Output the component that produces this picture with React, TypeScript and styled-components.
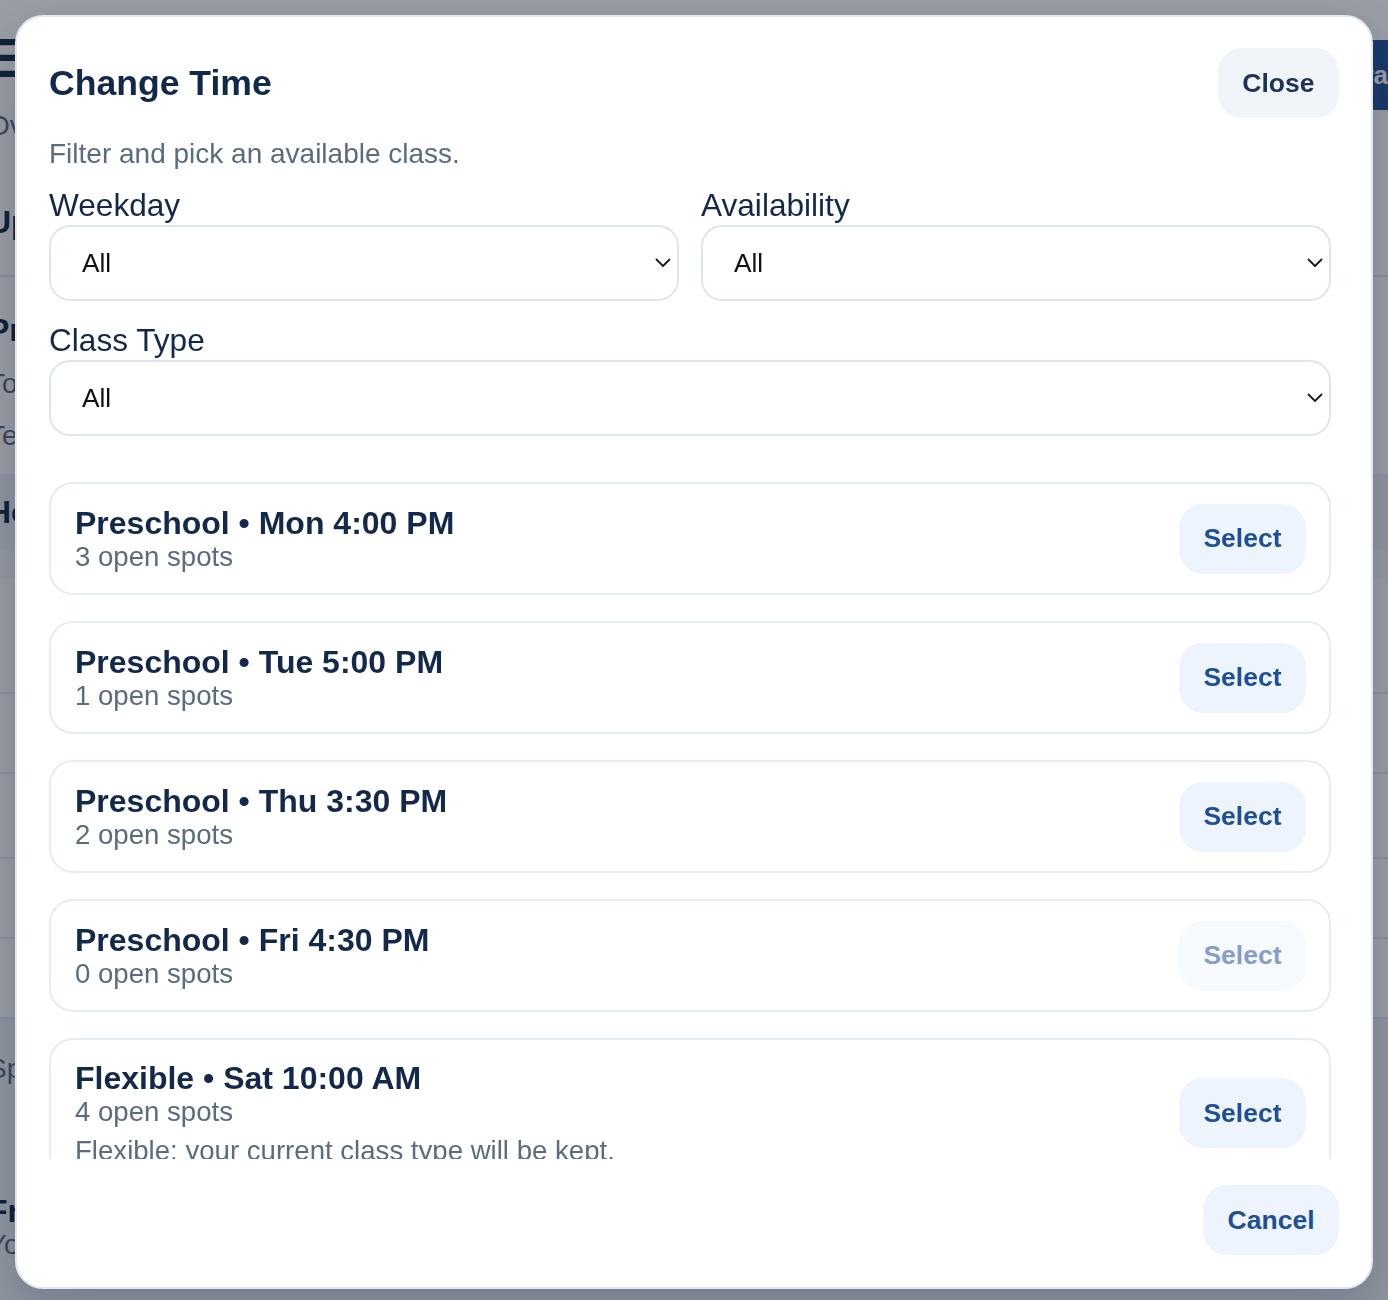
import React, { useState } from 'react';
import styled, { createGlobalStyle } from 'styled-components';

const COLORS = {
  Navy: '#13294b',
  Slate: '#5b6b80',
  Line: '#e2e8f0',
  CardLine: '#e6ecf5',
  Blue: '#1f4f95',
  BlueBg: '#eef4fd',
  GrayBg: '#f1f4f9',
  GrayText: '#1e3358',
};

const GlobalStyle = createGlobalStyle`
  * { box-sizing: border-box; }
  html, body { margin: 0; height: 100%; overflow: hidden; }
  body {
    font-family: "Liberation Sans", Arial, Helvetica, sans-serif;
    background: #ffffff;
    color: ${COLORS.Navy};
  }
`;

type Slot = {
  id: number;
  type: string;
  day: string;
  time: string;
  spots: number;
  note?: string;
};

const SLOTS: Slot[] = [
  { id: 1, type: 'Preschool', day: 'Mon', time: '4:00 PM', spots: 3 },
  { id: 2, type: 'Preschool', day: 'Tue', time: '5:00 PM', spots: 1 },
  { id: 3, type: 'Preschool', day: 'Thu', time: '3:30 PM', spots: 2 },
  { id: 4, type: 'Preschool', day: 'Fri', time: '4:30 PM', spots: 0 },
  {
    id: 5,
    type: 'Flexible',
    day: 'Sat',
    time: '10:00 AM',
    spots: 4,
    note: 'Flexible: your current class type will be kept.',
  },
];

const Chevron = () => (
  <S.Chevron width="16" height="10" viewBox="0 0 16 10" fill="none">
    <path d="M1.5 1.5 8 8l6.5-6.5" stroke="#1b1b1b" strokeWidth="1.8" strokeLinecap="round" strokeLinejoin="round" />
  </S.Chevron>
);

type FilterProps = {
  id: string;
  label: string;
  options: string[];
  wide?: boolean;
};

const Filter = ({ id, label, options, wide }: FilterProps) => (
  <S.Field $wide={wide}>
    <S.Label htmlFor={id}>{label}</S.Label>
    <S.SelectWrap>
      <S.Select id={id} defaultValue="All">
        {options.map((o) => (
          <option key={o} value={o}>
            {o}
          </option>
        ))}
      </S.Select>
      <Chevron />
    </S.SelectWrap>
  </S.Field>
);

const BackgroundPage = () => (
  <B.Page aria-hidden="true">
    <B.Top>
      <B.Heading>Enrollment</B.Heading>
      <B.Button>Book extra</B.Button>
    </B.Top>
    <B.Sub>Overview of your bookings</B.Sub>
    <B.Section>Upcoming bookings</B.Section>
    <B.Rule />
    <B.Block>
      <B.Strong>Preschool level</B.Strong>
      <B.Muted>Tool kit included</B.Muted>
      <B.Muted>Teacher: Hannah</B.Muted>
    </B.Block>
    <B.Band $tone="dark">
      <B.Strong>Houses</B.Strong>
    </B.Band>
    <B.Band $tone="light" />
    <B.Row $h={115} />
    <B.Row $h={80} />
    <B.Row $h={85} />
    <B.Row $h={80} />
    <B.Row $h={80} />
    <B.Band $tone="dark" $h={290}>
      <B.Muted>Space left</B.Muted>
      <B.Gap />
      <B.Strong>Free time</B.Strong>
      <B.Muted>Your notes</B.Muted>
    </B.Band>
  </B.Page>
);

const App = () => {
  const [picked, setPicked] = useState<number | null>(null);

  return (
    <>
      <GlobalStyle />
      <BackgroundPage />
      <S.Overlay>
        <S.Modal role="dialog" aria-modal="true" aria-labelledby="change-time-title">
          <S.Header>
            <S.Title id="change-time-title">Change Time</S.Title>
            <S.Button $tone="neutral">Close</S.Button>
          </S.Header>
          <S.Subtitle>Filter and pick an available class.</S.Subtitle>
          <S.Body>
            <S.Filters>
              <Filter id="weekday" label="Weekday" options={['All', 'Mon', 'Tue', 'Thu', 'Fri', 'Sat']} />
              <Filter id="availability" label="Availability" options={['All', 'Open spots', 'Full']} />
              <Filter id="class-type" label="Class Type" options={['All', 'Preschool', 'Flexible']} wide />
            </S.Filters>
            <S.List>
              {SLOTS.map((slot) => (
                <S.Card key={slot.id} $active={picked === slot.id}>
                  <S.CardText>
                    <S.CardTitle>
                      {slot.type} • {slot.day} {slot.time}
                    </S.CardTitle>
                    <S.Meta>{slot.spots} open spots</S.Meta>
                    {slot.note && <S.Note>{slot.note}</S.Note>}
                  </S.CardText>
                  <S.Button
                    $tone="primary"
                    disabled={slot.spots === 0}
                    onClick={() => setPicked(slot.id)}
                  >
                    Select
                  </S.Button>
                </S.Card>
              ))}
            </S.List>
          </S.Body>
          <S.Footer>
            <S.Button $tone="primary">Cancel</S.Button>
          </S.Footer>
        </S.Modal>
      </S.Overlay>
    </>
  );
};
export default App;

const S = {
  Overlay: styled.div`
    position: fixed;
    inset: 0;
    display: flex;
    padding: 15px 15px 11px;
    background: rgba(15, 23, 42, 0.42);
  `,
  Modal: styled.div`
    flex: 1;
    min-width: 0;
    display: flex;
    flex-direction: column;
    background: #ffffff;
    border: 2px solid ${COLORS.Line};
    border-radius: 28px;
    padding: 31px 32px 32px;
    box-shadow: 0 24px 60px rgba(15, 23, 42, 0.22);
  `,
  Header: styled.div`
    display: flex;
    align-items: center;
    justify-content: space-between;
  `,
  Title: styled.h2`
    margin: 0;
    font-size: 35.6px;
    line-height: 40px;
    font-weight: 700;
    color: ${COLORS.Navy};
  `,
  Subtitle: styled.p`
    margin: 20px 0 0;
    font-size: 28px;
    line-height: 32px;
    color: ${COLORS.Slate};
  `,
  Button: styled.button<{ $tone: 'neutral' | 'primary' }>`
    flex-shrink: 0;
    height: 70px;
    padding: 0 24.5px;
    border: none;
    border-radius: 24px;
    font-family: inherit;
    font-size: 26.5px;
    font-weight: 700;
    cursor: pointer;
    background: ${({ $tone }) => ($tone === 'neutral' ? COLORS.GrayBg : COLORS.BlueBg)};
    color: ${({ $tone }) => ($tone === 'neutral' ? COLORS.GrayText : COLORS.Blue)};

    &:disabled {
      opacity: 0.55;
      cursor: not-allowed;
    }
  `,
  Body: styled.div`
    flex: 1;
    min-height: 0;
    margin-top: 17px;
    padding-right: 8px;
    overflow-y: auto;
    scrollbar-width: none;
    &::-webkit-scrollbar {
      display: none;
    }
  `,
  Filters: styled.div`
    display: grid;
    grid-template-columns: 1fr 1fr;
    gap: 21px 22px;
  `,
  Field: styled.div<{ $wide?: boolean }>`
    display: flex;
    flex-direction: column;
    gap: 2px;
    grid-column: ${({ $wide }) => ($wide ? '1 / -1' : 'auto')};
  `,
  Label: styled.label`
    font-size: 31.6px;
    line-height: 36px;
    color: ${COLORS.Navy};
  `,
  SelectWrap: styled.div`
    position: relative;
  `,
  Select: styled.select`
    width: 100%;
    height: 76px;
    appearance: none;
    -webkit-appearance: none;
    border: 2px solid #dfe5ee;
    border-radius: 21px;
    background: #ffffff;
    padding: 0 56px 0 31px;
    font-family: inherit;
    font-size: 26.25px;
    color: #111111;
    outline: none;
  `,
  Chevron: styled.svg`
    position: absolute;
    right: 8px;
    top: 50%;
    transform: translateY(-50%);
    pointer-events: none;
  `,
  List: styled.div`
    margin-top: 46px;
    display: flex;
    flex-direction: column;
    gap: 26px;
  `,
  Card: styled.div<{ $active?: boolean }>`
    display: flex;
    align-items: center;
    justify-content: space-between;
    gap: 24px;
    padding: 19.5px 23px 19.5px 24px;
    border: 2px solid ${({ $active }) => ($active ? '#9fb8e0' : COLORS.CardLine)};
    border-radius: 24px;
    background: #ffffff;
  `,
  CardText: styled.div`
    display: flex;
    flex-direction: column;
    min-width: 0;
  `,
  CardTitle: styled.div`
    font-size: 32px;
    line-height: 36px;
    font-weight: 700;
    color: ${COLORS.Navy};
  `,
  Meta: styled.div`
    font-size: 27.6px;
    line-height: 32px;
    color: ${COLORS.Slate};
  `,
  Note: styled.div`
    margin-top: 7px;
    font-size: 27.6px;
    line-height: 32px;
    color: ${COLORS.Slate};
  `,
  Footer: styled.div`
    display: flex;
    justify-content: flex-end;
    padding-top: 26px;
  `,
};

const B = {
  Page: styled.div`
    width: 1440px;
    margin-left: calc(50% - 720px);
    padding: 40px 0 0 14px;
  `,
  Top: styled.div`
    display: flex;
    align-items: flex-start;
    justify-content: space-between;
    height: 70px;
  `,
  Heading: styled.h1`
    margin: -14px 0 0;
    font-size: 56px;
    line-height: 64px;
    font-weight: 700;
    color: ${COLORS.Navy};
  `,
  Button: styled.div`
    display: flex;
    align-items: center;
    height: 70px;
    padding: 0 26px;
    background: #24519b;
    color: #ffffff;
    font-size: 26px;
    font-weight: 700;
    border-radius: 14px 0 0 14px;
  `,
  Sub: styled.div`
    font-size: 28px;
    line-height: 32px;
    color: ${COLORS.Slate};
  `,
  Section: styled.div`
    margin-top: 62px;
    font-size: 32px;
    line-height: 36px;
    font-weight: 700;
    color: ${COLORS.Navy};
  `,
  Rule: styled.div`
    margin-top: 35px;
    margin-left: -14px;
    border-top: 2px solid ${COLORS.Line};
  `,
  Block: styled.div`
    display: flex;
    flex-direction: column;
    gap: 20px;
    padding: 35px 0 22px;
  `,
  Strong: styled.div`
    font-size: 32px;
    line-height: 36px;
    font-weight: 700;
    color: ${COLORS.Navy};
  `,
  Muted: styled.div`
    font-size: 28px;
    line-height: 32px;
    color: ${COLORS.Slate};
  `,
  Gap: styled.div`
    height: 108px;
  `,
  Band: styled.div<{ $tone: 'dark' | 'light'; $h?: number }>`
    display: flex;
    flex-direction: column;
    justify-content: ${({ $h }) => ($h ? 'flex-start' : 'center')};
    padding-top: ${({ $h }) => ($h ? '34px' : '0')};
    height: ${({ $h, $tone }) => ($h ? $h : $tone === 'dark' ? 75 : 30)}px;
    margin-left: -14px;
    padding-left: 14px;
    background: ${({ $tone }) => ($tone === 'dark' ? '#eef2f7' : '#f6f8fb')};
  `,
  Row: styled.div<{ $h: number }>`
    height: ${({ $h }) => $h}px;
    margin-left: -14px;
    border-bottom: 2px solid ${COLORS.Line};
  `,
};
